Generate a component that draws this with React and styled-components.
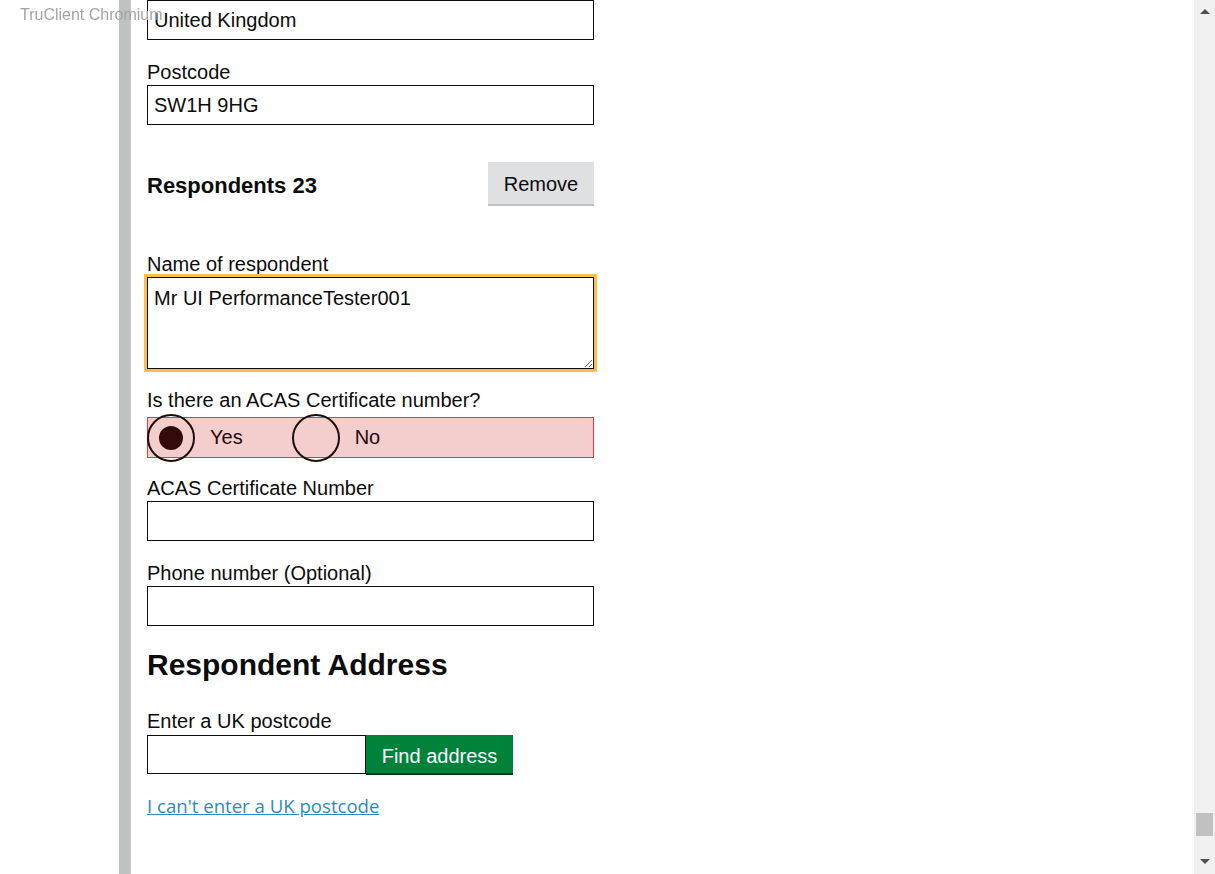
import React from "react";
import styled, { createGlobalStyle } from "styled-components";

const Global = createGlobalStyle`
  html, body { margin: 0; padding: 0; background: #fff; overflow: hidden; }
  body { font-family: "Liberation Sans", Arial, sans-serif; color: #0b0c0c; }
  * { box-sizing: border-box; }
`;

const Page = styled.div`
  display: flex;
  width: 1215px;
  height: 874px;
  overflow: hidden;
`;

const Gutter = styled.div`
  width: 119px;
  flex: none;
`;

const SideRule = styled.div`
  width: 12px;
  flex: none;
  background: #bfc1c3;
  border-right: 1px solid #c8c9ca;
`;

const Main = styled.main`
  width: 463px;
  padding-left: 16px;
  display: flex;
  flex-direction: column;
`;

const Group = styled.div`
  margin-top: ${(p) => p.$mt || 0}px;
  display: flex;
  flex-direction: column;
`;

const Label = styled.label`
  display: block;
  font-size: 20px;
  line-height: 25px;
  height: 25px;
  margin-bottom: ${(p) => p.$mb || 0}px;
`;

const TextInput = styled.input`
  width: ${(p) => p.$w || 447}px;
  height: 40px;
  border: 1px solid #0b0c0c;
  border-radius: 0;
  padding: 0 6px;
  font-family: "Liberation Sans", Arial, sans-serif;
  font-size: 20px;
  color: #0b0c0c;
  background: #fff;
  outline: none;
`;

const TextArea = styled.textarea`
  width: 447px;
  height: 92px;
  border: 1px solid #0b0c0c;
  border-radius: 0;
  padding: 8px 6px 6px;
  font-family: "Liberation Sans", Arial, sans-serif;
  font-size: 20px;
  line-height: 25px;
  color: #0b0c0c;
  outline: 3px solid #ffbf47;
  outline-offset: 0;
  resize: vertical;
  display: block;
`;

const HeaderRow = styled.div`
  margin-top: ${(p) => p.$mt || 0}px;
  display: flex;
  align-items: center;
  justify-content: space-between;
  width: 447px;
  height: 42px;
`;

const SubHeading = styled.h2`
  margin: 6px 0 0;
  font-size: 22px;
  font-weight: 700;
  line-height: 1;
`;

const GreyButton = styled.button`
  width: 106px;
  height: 42px;
  border: 0;
  border-radius: 0;
  background: #dee0e2;
  box-shadow: 0 2px 0 #bfc1c3;
  font-family: "Liberation Sans", Arial, sans-serif;
  font-size: 20px;
  color: #0b0c0c;
  padding: 3px 0 0;
`;

const RadioBox = styled.div`
  margin-top: 4px;
  width: 447px;
  height: 41px;
  background: #f4cdcd;
  border: 1px solid #e8383b;
  display: flex;
  align-items: center;
`;

const RadioItem = styled.label`
  display: flex;
  align-items: center;
  margin-right: ${(p) => p.$mr || 0}px;
  font-size: 20px;
  color: #1d0a0a;
`;

const Circle = styled.span`
  width: 48px;
  height: 48px;
  border: 2px solid #1e0b0b;
  border-radius: 50%;
  display: flex;
  align-items: center;
  justify-content: center;
  margin-left: -1px;
  margin-right: 15px;
  flex: none;
  &::after {
    content: "";
    width: 24px;
    height: 24px;
    border-radius: 50%;
    background: #330b0b;
    display: ${(p) => (p.$checked ? "block" : "none")};
  }
`;

const Heading = styled.h2`
  margin: 21px 0 0;
  font-size: 30px;
  line-height: 36px;
  font-weight: 700;
`;

const PostcodeRow = styled.div`
  display: flex;
  align-items: flex-start;
`;

const GreenButton = styled.button`
  width: 147px;
  height: 38px;
  border: 0;
  border-radius: 0;
  background: #00823b;
  box-shadow: 0 2px 0 #003618;
  color: #fff;
  font-family: "Liberation Sans", Arial, sans-serif;
  font-size: 20px;
  padding: 5px 0 0;
`;

const Link = styled.a`
  margin-top: 19px;
  font-family: "Open Sans", "Liberation Sans", sans-serif;
  font-size: 18.6px;
  line-height: 25px;
  color: #2b8cc4;
  text-decoration: underline;
  align-self: flex-start;
`;

const Overlay = styled.div`
  position: fixed;
  left: 20px;
  top: 6px;
  font-family: "Liberation Sans", Arial, sans-serif;
  font-size: 16px;
  line-height: 18px;
  color: #a4a4a4;
  pointer-events: none;
`;

const Scrollbar = styled.div`
  position: fixed;
  right: 0;
  top: 0;
  width: 21px;
  height: 874px;
  background: #f1f1f1;
`;

const Arrow = styled.div`
  position: absolute;
  left: 6px;
  ${(p) => (p.$down ? "bottom: 10px;" : "top: 9px;")}
  width: 0;
  height: 0;
  border-left: 5px solid transparent;
  border-right: 5px solid transparent;
  ${(p) => (p.$down ? "border-top: 5px solid #505050;" : "border-bottom: 5px solid #505050;")}
`;

const Thumb = styled.div`
  position: absolute;
  left: 2px;
  top: 813px;
  width: 17px;
  height: 23px;
  background: #c1c1c1;
`;

export default function App() {
  return (
    <>
      <Global />
      <Page>
        <Gutter />
        <SideRule />
        <Main>
          <TextInput defaultValue="United Kingdom" />
          <Group $mt={20}>
            <Label>Postcode</Label>
            <TextInput defaultValue="SW1H 9HG" />
          </Group>
          <HeaderRow $mt={37}>
            <SubHeading>Respondents 23</SubHeading>
            <GreyButton>Remove</GreyButton>
          </HeaderRow>
          <Group $mt={48}>
            <Label>Name of respondent</Label>
            <TextArea defaultValue="Mr UI PerformanceTester001" />
          </Group>
          <Group $mt={19}>
            <Label>Is there an ACAS Certificate number?</Label>
            <RadioBox>
              <RadioItem $mr={50}>
                <Circle $checked />
                Yes
              </RadioItem>
              <RadioItem>
                <Circle />
                No
              </RadioItem>
            </RadioBox>
          </Group>
          <Group $mt={18}>
            <Label>ACAS Certificate Number</Label>
            <TextInput />
          </Group>
          <Group $mt={20}>
            <Label>Phone number (Optional)</Label>
            <TextInput />
          </Group>
          <Heading>Respondent Address</Heading>
          <Group $mt={26}>
            <Label $mb={1}>Enter a UK postcode</Label>
            <PostcodeRow>
              <TextInput $w={219} style={{ height: 39 }} />
              <GreenButton>Find address</GreenButton>
            </PostcodeRow>
          </Group>
          <Link href="#">I can't enter a UK postcode</Link>
        </Main>
      </Page>
      <Overlay>TruClient Chromium</Overlay>
      <Scrollbar>
        <Arrow />
        <Thumb />
        <Arrow $down />
      </Scrollbar>
    </>
  );
}
